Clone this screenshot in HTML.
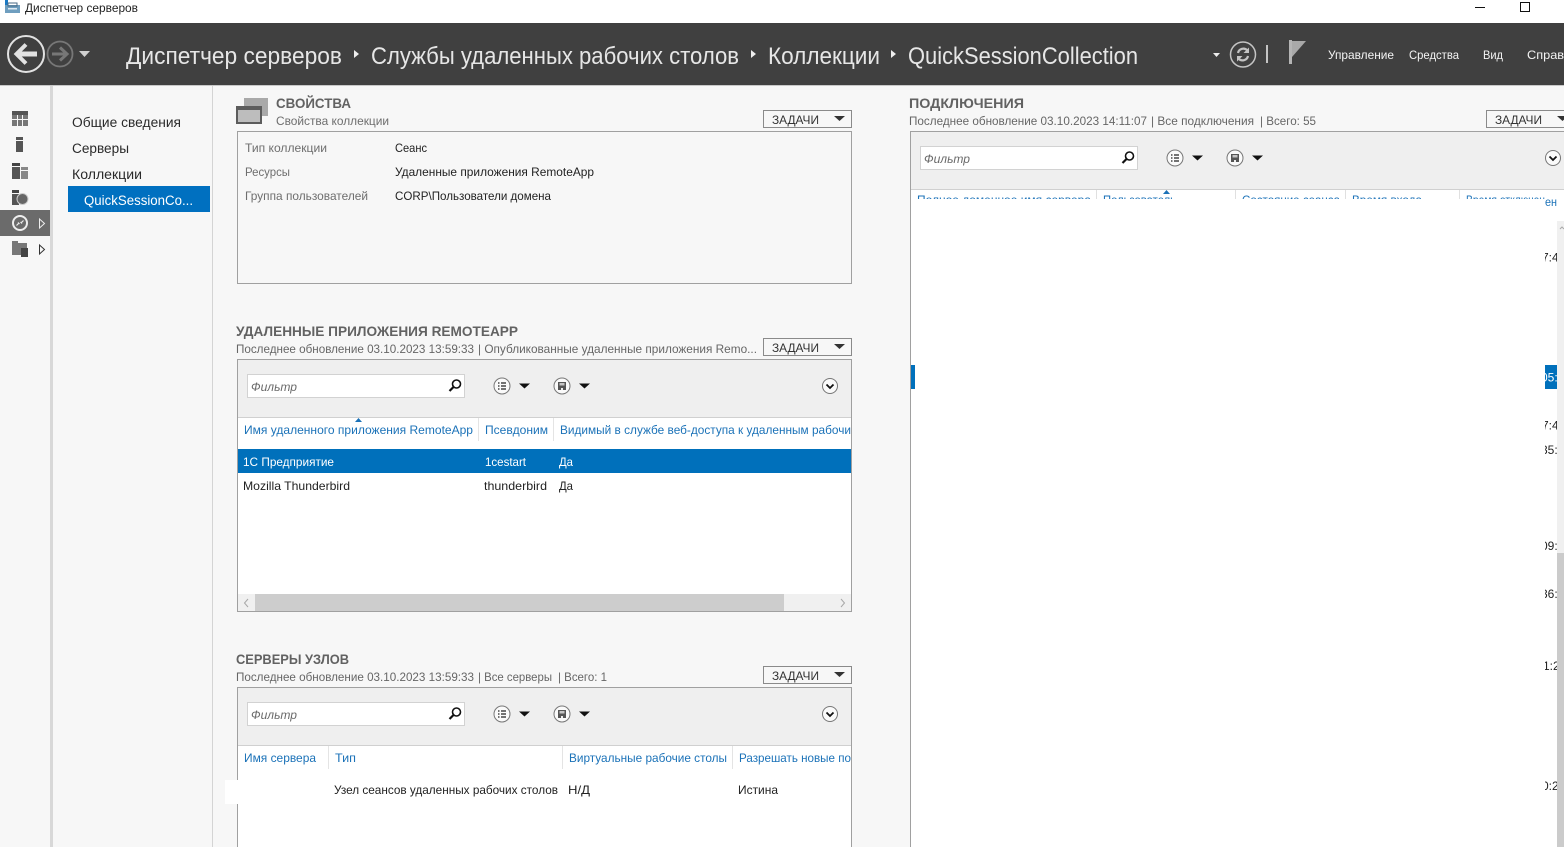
<!DOCTYPE html>
<html lang="ru">
<head>
<meta charset="utf-8">
<title>Диспетчер серверов</title>
<style>
html,body{margin:0;padding:0;width:1564px;height:847px;overflow:hidden;background:#f7f7f7}
svg{display:block}
text{font-family:"Liberation Sans",sans-serif;font-size:12px;fill:#222;white-space:pre}
.g{fill:#6e6e6e}
.d{fill:#666}
.b{fill:#1b72b8}
.h{font-size:14px;font-weight:bold;fill:#626262}
.n{font-size:13.5px;fill:#2a2a2a}
.t{font-size:24px;fill:#e6e6e6}
.m{font-size:12px;fill:#f4f4f4}
.f{font-style:italic;fill:#6a6a6a}
.w{fill:#fff}
.z{font-size:12px;fill:#333}
</style>
</head>
<body>
<svg width="1564" height="847" viewBox="0 0 1564 847" xmlns="http://www.w3.org/2000/svg">
<defs>
<clipPath id="ch"><rect x="911" y="190" width="634" height="9"/></clipPath>
<clipPath id="cf"><rect x="1545" y="240" width="12" height="560"/></clipPath>
<g id="tb">
  <rect x="0.500" y="0.500" width="217" height="23" fill="#fff" stroke="#d2d2d2"/>
  <text x="4" y="17" class="f" textLength="46" lengthAdjust="spacingAndGlyphs">Фильтр</text>
  <circle cx="209.500" cy="10" r="4" fill="none" stroke="#111" stroke-width="1.600"/>
  <path d="M206.500 13 L202.500 17" stroke="#111" stroke-width="2.200" fill="none"/>
  <circle cx="255" cy="12" r="8" fill="#fafafa" stroke="#777"/>
  <path d="M251 9h1.500M251 12h1.500M251 15h1.500M254 9h5M254 12h5M254 15h5" stroke="#444" stroke-width="1.500"/>
  <path d="M272 9.500h11l-5.500 5z" fill="#111"/>
  <circle cx="315" cy="12" r="8" fill="#fafafa" stroke="#777"/>
  <path d="M311 8h8v8h-8z" fill="#555"/>
  <rect x="312.500" y="9" width="5" height="2.500" fill="#c4c4c4"/>
  <rect x="314" y="14" width="2" height="2" fill="#eee"/>
  <path d="M332 9.500h11l-5.500 5z" fill="#111"/>
</g>
<g id="ex">
  <circle cx="0" cy="0" r="7.500" fill="#fafafa" stroke="#777"/>
  <path d="M-3.500 -1.500 L0 2 L3.500 -1.500" fill="none" stroke="#111" stroke-width="1.800"/>
</g>
<g id="zd">
  <rect x="0.500" y="0.500" width="88" height="17" fill="#f7f7f7" stroke="#8a8a8a"/>
  <text x="9" y="14" class="z" textLength="47" lengthAdjust="spacingAndGlyphs">ЗАДАЧИ</text>
  <path d="M71 6h11l-5.500 5z" fill="#333"/>
</g>
</defs>

<!-- title bar -->
<rect width="1564" height="23" fill="#fff"/>
<rect x="5" y="0" width="3" height="5" fill="#1a79c4"/>
<rect x="5" y="5" width="15" height="8" fill="#6f9ebf"/>
<rect x="8" y="3" width="9" height="3" fill="none" stroke="#4a6a85"/>
<rect x="8" y="8" width="9" height="1.500" fill="#dfe9f1"/>
<text x="25" y="12" textLength="113" lengthAdjust="spacingAndGlyphs">Диспетчер серверов</text>
<rect x="1475" y="7" width="10" height="1" fill="#111"/>
<rect x="1520.500" y="2.500" width="9" height="9" fill="none" stroke="#111"/>

<!-- header -->
<rect y="23" width="1564" height="62" fill="#404040"/>
<rect y="85" width="1564" height="1" fill="#c8c8c8"/>
<circle cx="26" cy="54" r="18" fill="none" stroke="#e2e2e2" stroke-width="2"/>
<path d="M16 54H37" stroke="#e2e2e2" stroke-width="5"/>
<path d="M26 44.500L16.500 54L26 63.500" fill="none" stroke="#e2e2e2" stroke-width="4"/>
<circle cx="60" cy="54" r="12.500" fill="none" stroke="#777" stroke-width="1.800"/>
<path d="M52 54H67" stroke="#777" stroke-width="3"/>
<path d="M60 47.500L67 54L60 60.500" fill="none" stroke="#777" stroke-width="3"/>
<path d="M79 51h11l-5.500 6z" fill="#d0d0d0"/>
<text x="126" y="64" class="t" textLength="216" lengthAdjust="spacingAndGlyphs">Диспетчер серверов</text>
<path d="M354 50v8l5-4z" fill="#eee"/>
<text x="371" y="64" class="t" textLength="368" lengthAdjust="spacingAndGlyphs">Службы удаленных рабочих столов</text>
<path d="M751 50v8l5-4z" fill="#eee"/>
<text x="768" y="64" class="t" textLength="112" lengthAdjust="spacingAndGlyphs">Коллекции</text>
<path d="M891 50v8l5-4z" fill="#eee"/>
<text x="908" y="64" class="t" textLength="230" lengthAdjust="spacingAndGlyphs">QuickSessionCollection</text>
<path d="M1213 53h7l-3.500 4z" fill="#eee"/>
<circle cx="1243" cy="54.500" r="12.500" fill="none" stroke="#c4c4c4" stroke-width="1.500"/>
<path d="M1238 53a5.500 5.500 0 0 1 9.500-2.500M1248 56a5.500 5.500 0 0 1-9.500 2.500" fill="none" stroke="#c4c4c4" stroke-width="2.200"/>
<path d="M1249 47.500v5.500h-5.500zM1237 61.500v-5.500h5.500z" fill="#c4c4c4"/>
<rect x="1266" y="45" width="2" height="18" fill="#c4c4c4"/>
<rect x="1289" y="40" width="3" height="24" fill="#b5b5b5"/>
<path d="M1292 41h14l-14 16z" fill="#a9a9a9"/>
<text x="1328" y="59" class="m" textLength="66" lengthAdjust="spacingAndGlyphs">Управление</text>
<text x="1409" y="59" class="m" textLength="50" lengthAdjust="spacingAndGlyphs">Средства</text>
<text x="1483" y="59" class="m" textLength="20" lengthAdjust="spacingAndGlyphs">Вид</text>
<text x="1527" y="59" class="m" textLength="50" lengthAdjust="spacingAndGlyphs">Справка</text>

<!-- left strip -->
<rect x="0" y="86" width="50" height="761" fill="#f7f7f7"/>
<rect x="50" y="86" width="3" height="761" fill="#d8d8d8"/>
<rect x="12" y="111" width="16" height="4" fill="#555"/>
<path d="M12 115h5v4h-5zM18 115h4v4h-4zM23 115h5v4h-5zM12 120h5v6h-5zM18 120h4v6h-4zM23 120h5v6h-5z" fill="#777"/>
<rect x="16" y="137" width="7" height="3" fill="#555"/>
<rect x="16" y="141" width="7" height="11" fill="#555"/>
<rect x="12" y="163" width="8" height="3" fill="#444"/>
<rect x="12" y="167" width="8" height="12" fill="#555"/>
<rect x="21" y="167" width="7" height="3" fill="#888"/>
<rect x="21" y="171" width="7" height="8" fill="#888"/>
<rect x="12" y="190" width="7" height="3" fill="#444"/>
<rect x="12" y="194" width="7" height="11" fill="#555"/>
<circle cx="22.500" cy="199" r="5.500" fill="#666" stroke="#ccc"/>
<rect x="0" y="210" width="50" height="26" fill="#6b6b6b"/>
<circle cx="20" cy="223" r="7" fill="none" stroke="#eee" stroke-width="2"/>
<path d="M16.500 225.500l2.500-2.500M18 222.500l1.500 1.500M23.500 220.500l-2.500 2.500M22 223.500l-1.500-1.500" fill="none" stroke="#eee" stroke-width="1.200"/>
<path d="M39.500 219v9l5-4.500z" fill="none" stroke="#eee"/>
<rect x="12" y="241" width="6" height="2" fill="#777"/>
<rect x="12" y="243" width="15" height="12" fill="#777"/>
<rect x="21" y="248" width="7" height="9" fill="#444"/>
<path d="M39.500 245v9l5-4.500z" fill="none" stroke="#333"/>

<!-- nav -->
<rect x="53" y="86" width="159" height="761" fill="#f7f7f7"/>
<rect x="212" y="86" width="1" height="761" fill="#d4d4d4"/>
<text x="72" y="127" class="n" textLength="109" lengthAdjust="spacingAndGlyphs">Общие сведения</text>
<text x="72" y="153" class="n" textLength="57" lengthAdjust="spacingAndGlyphs">Серверы</text>
<text x="72" y="179" class="n" textLength="70" lengthAdjust="spacingAndGlyphs">Коллекции</text>
<rect x="68" y="186" width="142" height="26" fill="#0070c0"/>
<text x="84" y="205" class="n" style="fill:#fff" textLength="109" lengthAdjust="spacingAndGlyphs">QuickSessionCo...</text>

<!-- properties -->
<rect x="244" y="98" width="24" height="18" fill="#a9a9a9"/>
<rect x="237" y="107" width="24" height="16" fill="#bdbdbd" stroke="#5c5c5c" stroke-width="2"/>
<rect x="237" y="107" width="24" height="3" fill="#5c5c5c"/>
<text x="276" y="108" class="h" textLength="75" lengthAdjust="spacingAndGlyphs">СВОЙСТВА</text>
<text x="276" y="125" class="g" textLength="113" lengthAdjust="spacingAndGlyphs">Свойства коллекции</text>
<use href="#zd" x="763" y="110"/>
<rect x="237.500" y="131.500" width="614" height="152" fill="#f7f7f7" stroke="#a0a0a0"/>
<text x="245" y="152" class="g" textLength="82" lengthAdjust="spacingAndGlyphs">Тип коллекции</text>
<text x="245" y="176" class="g" textLength="45" lengthAdjust="spacingAndGlyphs">Ресурсы</text>
<text x="245" y="200" class="g" textLength="123" lengthAdjust="spacingAndGlyphs">Группа пользователей</text>
<text x="395" y="152" textLength="32" lengthAdjust="spacingAndGlyphs">Сеанс</text>
<text x="395" y="176" textLength="199" lengthAdjust="spacingAndGlyphs">Удаленные приложения RemoteApp</text>
<text x="395" y="200" textLength="156" lengthAdjust="spacingAndGlyphs">CORP\Пользователи домена</text>

<!-- remoteapp -->
<text x="236" y="336" class="h" textLength="282" lengthAdjust="spacingAndGlyphs">УДАЛЕННЫЕ ПРИЛОЖЕНИЯ REMOTEAPP</text>
<text x="236" y="353" class="d" textLength="238" lengthAdjust="spacingAndGlyphs">Последнее обновление 03.10.2023 13:59:33</text>
<text x="478" y="353" class="d" textLength="279" lengthAdjust="spacingAndGlyphs">| Опубликованные удаленные приложения Remo...</text>
<use href="#zd" x="763" y="338"/>
<rect x="237.500" y="359.500" width="614" height="252" fill="#fff" stroke="#a0a0a0"/>
<rect x="238" y="360" width="613" height="57" fill="#efefef"/>
<rect x="238" y="417" width="613" height="1" fill="#d0d0d0"/>
<use href="#tb" x="247" y="374"/>
<use href="#ex" x="830" y="386"/>
<path d="M355 422l3.500-4 3.500 4z" fill="#1b72b8"/>
<rect x="478" y="418" width="1" height="23" fill="#e4e4e4"/>
<rect x="553" y="418" width="1" height="23" fill="#e4e4e4"/>
<text x="244" y="434" class="b" textLength="229" lengthAdjust="spacingAndGlyphs">Имя удаленного приложения RemoteApp</text>
<text x="485" y="434" class="b" textLength="63" lengthAdjust="spacingAndGlyphs">Псевдоним</text>
<text x="560" y="434" class="b" textLength="291" lengthAdjust="spacingAndGlyphs">Видимый в службе веб-доступа к удаленным рабочи</text>
<rect x="238" y="449" width="613" height="24" fill="#0070bb"/>
<text x="243" y="466" class="w" textLength="91" lengthAdjust="spacingAndGlyphs">1С Предприятие</text>
<text x="485" y="466" class="w" textLength="41" lengthAdjust="spacingAndGlyphs">1cestart</text>
<text x="559" y="466" class="w" textLength="14" lengthAdjust="spacingAndGlyphs">Да</text>
<text x="243" y="490" textLength="107" lengthAdjust="spacingAndGlyphs">Mozilla Thunderbird</text>
<text x="484" y="490" textLength="63" lengthAdjust="spacingAndGlyphs">thunderbird</text>
<text x="559" y="490" textLength="14" lengthAdjust="spacingAndGlyphs">Да</text>
<rect x="238" y="594" width="613" height="17" fill="#f0f0f0"/>
<rect x="255" y="594" width="529" height="17" fill="#cdcdcd"/>
<path d="M248 599l-3.500 4 3.500 4M841 599l3.500 4-3.500 4" fill="none" stroke="#a8a8a8"/>

<!-- host servers -->
<text x="236" y="664" class="h" textLength="113" lengthAdjust="spacingAndGlyphs">СЕРВЕРЫ УЗЛОВ</text>
<text x="236" y="681" class="d" textLength="238" lengthAdjust="spacingAndGlyphs">Последнее обновление 03.10.2023 13:59:33</text>
<text x="478" y="681" class="d" textLength="74" lengthAdjust="spacingAndGlyphs">| Все серверы</text>
<text x="558" y="681" class="d" textLength="49" lengthAdjust="spacingAndGlyphs">| Всего: 1</text>
<use href="#zd" x="763" y="666"/>
<rect x="237.500" y="687.500" width="614" height="170" fill="#fff" stroke="#a0a0a0"/>
<rect x="238" y="688" width="613" height="57" fill="#efefef"/>
<rect x="238" y="745" width="613" height="1" fill="#d0d0d0"/>
<use href="#tb" x="247" y="702"/>
<use href="#ex" x="830" y="714"/>
<rect x="328" y="746" width="1" height="23" fill="#e4e4e4"/>
<rect x="562" y="746" width="1" height="23" fill="#e4e4e4"/>
<rect x="732" y="746" width="1" height="23" fill="#e4e4e4"/>
<text x="244" y="762" class="b" textLength="72" lengthAdjust="spacingAndGlyphs">Имя сервера</text>
<text x="335" y="762" class="b" textLength="21" lengthAdjust="spacingAndGlyphs">Тип</text>
<text x="569" y="762" class="b" textLength="158" lengthAdjust="spacingAndGlyphs">Виртуальные рабочие столы</text>
<text x="739" y="762" class="b" textLength="112" lengthAdjust="spacingAndGlyphs">Разрешать новые по</text>
<rect x="225" y="780" width="13" height="24" fill="#fff"/>
<text x="334" y="794" textLength="224" lengthAdjust="spacingAndGlyphs">Узел сеансов удаленных рабочих столов</text>
<text x="568" y="794" textLength="22" lengthAdjust="spacingAndGlyphs">Н/Д</text>
<text x="738" y="794" textLength="40" lengthAdjust="spacingAndGlyphs">Истина</text>

<!-- connections -->
<text x="909" y="108" class="h" textLength="115" lengthAdjust="spacingAndGlyphs">ПОДКЛЮЧЕНИЯ</text>
<text x="909" y="125" class="d" textLength="238" lengthAdjust="spacingAndGlyphs">Последнее обновление 03.10.2023 14:11:07</text>
<text x="1151" y="125" class="d" textLength="103" lengthAdjust="spacingAndGlyphs">| Все подключения</text>
<text x="1260" y="125" class="d" textLength="56" lengthAdjust="spacingAndGlyphs">| Всего: 55</text>
<use href="#zd" x="1486" y="110"/>
<rect x="910.500" y="131.500" width="670" height="730" fill="#fff" stroke="#a0a0a0"/>
<rect x="911" y="132" width="653" height="57" fill="#efefef"/>
<rect x="911" y="189" width="653" height="1" fill="#d0d0d0"/>
<use href="#tb" x="920" y="146"/>
<use href="#ex" x="1553" y="158"/>
<path d="M1163 194l3.500-4 3.500 4z" fill="#1b72b8"/>
<g fill="#e0e0e0">
<rect x="1096" y="190" width="1" height="9"/><rect x="1235" y="190" width="1" height="9"/>
<rect x="1345" y="190" width="1" height="9"/><rect x="1459" y="190" width="1" height="9"/>
</g>
<g clip-path="url(#ch)">
<text x="917" y="204" class="b" textLength="174" lengthAdjust="spacingAndGlyphs">Полное доменное имя сервера</text>
<text x="1103" y="204" class="b" textLength="73" lengthAdjust="spacingAndGlyphs">Пользователь</text>
<text x="1242" y="204" class="b" textLength="98" lengthAdjust="spacingAndGlyphs">Состояние сеанса</text>
<text x="1352" y="204" class="b" textLength="70" lengthAdjust="spacingAndGlyphs">Время входа</text>
<text x="1466" y="204" class="b" textLength="79" lengthAdjust="spacingAndGlyphs">Время отключен</text>
</g>
<text x="1545" y="206" class="b" textLength="12" lengthAdjust="spacingAndGlyphs">ен</text>
<rect x="911" y="365" width="4" height="24" fill="#0070bb"/>
<rect x="1545" y="365" width="12" height="24" fill="#0070bb"/>
<g clip-path="url(#cf)">
<text x="1542" y="261.500">7:4</text>
<text x="1541" y="381.500" class="w">05:</text>
<text x="1542" y="429.500">7:4</text>
<text x="1541" y="454">35:</text>
<text x="1541" y="550">09:</text>
<text x="1541" y="598">36:</text>
<text x="1543" y="670">1:2</text>
<text x="1542" y="790">0:2</text>
</g>
<rect x="1557" y="221" width="7" height="332" fill="#f0f0f0"/>
<rect x="1557" y="553" width="7" height="294" fill="#cbcbcb"/>
<path d="M1560 229l2-2 2 2" fill="none" stroke="#a8a8a8"/>
</svg>
</body>
</html>
